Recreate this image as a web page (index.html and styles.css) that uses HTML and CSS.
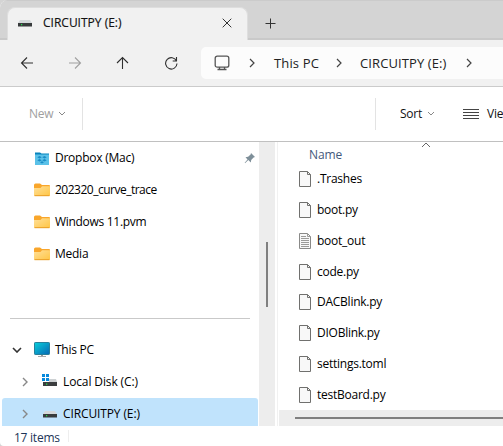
FILE: index.html
```html
<!DOCTYPE html>
<html lang="en">
<head>
<meta charset="utf-8">
<title>CIRCUITPY (E:)</title>
<link rel="stylesheet" href="styles.css">
</head>
<body>
<svg width="0" height="0" class="defs">
  <defs>
    <linearGradient id="gold" x1="0" y1="0" x2="1" y2="1"><stop offset="0" stop-color="#ffe09a"/><stop offset="1" stop-color="#ffc544"/></linearGradient>
    <linearGradient id="screen" x1="0" y1="0" x2="1" y2="1"><stop offset="0" stop-color="#08d0da"/><stop offset="1" stop-color="#0867b5"/></linearGradient>
    <symbol id="folder" viewBox="0 0 16 14"><path d="M0 2a1.500 1.500 0 0 1 1.500-1.500H6L8 2h7a1 1 0 0 1 1 1v4H0z" fill="#f9a62b"/><path d="M0 5h6.500L8 3.200h8V12a1 1 0 0 1-1 1H1a1 1 0 0 1-1-1z" fill="url(#gold)"/><path d="M.5 12.700h15" stroke="#e99d25"/></symbol>
    <symbol id="file" viewBox="0 0 12 16"><path d="M.5.500h8l3 3v12H.5z" fill="#f8f8f8" stroke="#70706e"/><path d="M8.500.500v3h3" fill="none" stroke="#70706e"/></symbol>
    <symbol id="textfile" viewBox="0 0 12 16"><path d="M.5.500h8l3 3v12H.5z" fill="#f8f8f8" stroke="#8a8a88"/><path d="M8.500.500v3h3M2 3.500h5M2 5.500h8M2 7.500h8M2 9.500h8M2 11.500h8M2 13.500h8" fill="none" stroke="#9b9b99"/></symbol>
    <symbol id="drive" viewBox="0 0 14 7"><path d="M2 0h10l2 3H0z" fill="#d4d8da"/><path d="M0 3h14v3.500H0z" fill="#383b3c"/><path d="M3 4h1.200v1.200H3z" fill="#24e04c"/></symbol>
    <symbol id="right" viewBox="0 0 6 10"><path d="M1 1l4 4-4 4" fill="none" stroke="currentColor" stroke-width="1.200"/></symbol>
    <symbol id="down" viewBox="0 0 8 5"><path d="M1 1l3 3 3-3" fill="none" stroke="currentColor"/></symbol>
  </defs>
</svg>
<div class="window">
  <header class="tabs">
    <div class="tab">
      <svg class="tab-drive"><use href="#drive"/></svg>
      <span class="tab-title">CIRCUITPY (E:)</span>
      <svg class="close" viewBox="0 0 10 10"><path d="M.7.700l8.600 8.600M9.300.700L.7 9.300"/></svg>
    </div>
    <svg class="plus" viewBox="0 0 11 11"><path d="M5.500.500v10M.5 5.500h10"/></svg>
  </header>
  <nav class="navbar">
    <svg class="nav-icon" viewBox="0 0 14 14"><path d="M13 7H1.500M7 1.500L1.500 7 7 12.500"/></svg>
    <svg class="nav-icon faded" viewBox="0 0 14 14"><path d="M1 7h11.500M7 1.500L12.500 7 7 12.500"/></svg>
    <svg class="nav-icon" viewBox="0 0 14 14"><path d="M6.500 13V1.500M1 7l5.500-5.500L12 7"/></svg>
    <svg class="nav-icon" viewBox="0 0 14 14"><path d="M12.500 5A5.700 5.700 0 1 0 13 7.500M12.500 1v4H8.700"/></svg>
    <div class="address">
      <svg class="monitor" viewBox="0 0 16 16"><rect x="1.200" y="1.200" width="13.600" height="11" rx="2"/><path d="M5.500 12v2.500M10.500 12v2.500M3.500 14.500h9"/></svg>
      <svg class="crumb-sep"><use href="#right"/></svg>
      <span class="crumb pc">This PC</span>
      <svg class="crumb-sep"><use href="#right"/></svg>
      <span class="crumb device">CIRCUITPY (E:)</span>
      <svg class="crumb-sep"><use href="#right"/></svg>
    </div>
  </nav>
  <div class="toolbar">
    <div class="new">New<svg class="drop"><use href="#down"/></svg></div>
    <div class="commands">
      <span class="sort">Sort</span><svg class="drop"><use href="#down"/></svg>
      <svg class="lines" viewBox="0 0 16 11"><path d="M0 .5h16M0 3.500h16M0 6.500h16M0 9.500h16"/></svg>
      <span class="view">View</span>
    </div>
  </div>
  <div class="content">
    <aside class="sidebar">
      <div class="row quick">
        <svg class="dropbox" viewBox="0 0 14 13"><path d="M0 .5h5l1.500 1H14v4H0z" fill="#0783bc"/><path d="M0 2.500h14V13H0z" fill="#5bc1e8"/><path d="M4.500 4L6.800 5.300 4.500 6.600 2.300 5.300zM9.500 4l2.200 1.300-2.200 1.300-2.300-1.300zM4.500 6.900l2.300 1.300-2.300 1.300-2.200-1.300zM9.500 6.900l2.200 1.300-2.200 1.300-2.300-1.300zM5 10.300L7 9.200l2 1.100-2 1.200z" fill="#1a8cc6"/></svg>
        <span class="t-dropbox">Dropbox (Mac)</span>
        <svg class="pin" viewBox="0 0 12 12"><path d="M7 1l4 4-1.400.400-2.400 2.500-.4 2.600-2.500-2.400L1 11.200l-.3-.4L3.500 7.400 1.500 5.200l2.600-.4L6.600 2.400z" fill="#7e8f99"/></svg>
      </div>
      <div class="row quick"><svg class="folder"><use href="#folder"/></svg><span class="t-curve">202320_curve_trace</span></div>
      <div class="row quick"><svg class="folder"><use href="#folder"/></svg><span class="t-win">Windows 11.pvm</span></div>
      <div class="row quick"><svg class="folder"><use href="#folder"/></svg><span>Media</span></div>
      <div class="divider"></div>
      <div class="row tree">
        <svg class="expand open" viewBox="0 0 10 6"><path d="M1 1l4 4 4-4"/></svg>
        <svg class="computer" viewBox="0 0 16 16"><path d="M7 12h2v3H7z" fill="#999"/><path d="M4 14.500h8" stroke="#aaa"/><rect x=".5" y=".5" width="15" height="12" rx=".7" fill="url(#screen)" stroke="#277f9a"/></svg>
        <span>This PC</span>
      </div>
      <div class="row leaf">
        <svg class="expand" viewBox="0 0 6 10"><path d="M1 1l4 4-4 4"/></svg>
        <svg class="disk" viewBox="0 0 16 13"><path d="M6 5h8l1 3H6z" fill="#cdd1d3"/><path d="M1 8h14v4H1z" fill="#3b3e3f"/><path d="M4 9.500h1.300v1.300H4z" fill="#24e04c"/><path d="M0 0h7v8H0z" fill="#fff"/><path d="M0 0h3v3H0zM4 0h3v3H4zM0 4h3v3H0zM4 4h3v3H4z" fill="#0789dc"/></svg>
        <span class="t-local">Local Disk (C:)</span>
      </div>
      <div class="row leaf selected">
        <svg class="expand" viewBox="0 0 6 10"><path d="M1 1l4 4-4 4"/></svg>
        <svg class="side-drive"><use href="#drive"/></svg>
        <span class="t-circuit">CIRCUITPY (E:)</span>
      </div>
    </aside>
    <div class="scrollbar"><div class="thumb"></div></div>
    <main class="files">
      <svg class="ascending" viewBox="0 0 10 6"><path d="M1 5l4-4 4 4"/></svg>
      <div class="heading">Name</div>
      <div class="file"><svg class="doc"><use href="#file"/></svg><span>.Trashes</span></div>
      <div class="file"><svg class="doc"><use href="#file"/></svg><span>boot.py</span></div>
      <div class="file"><svg class="doc"><use href="#textfile"/></svg><span>boot_out</span></div>
      <div class="file"><svg class="doc"><use href="#file"/></svg><span>code.py</span></div>
      <div class="file"><svg class="doc"><use href="#file"/></svg><span>DACBlink.py</span></div>
      <div class="file"><svg class="doc"><use href="#file"/></svg><span>DIOBlink.py</span></div>
      <div class="file"><svg class="doc"><use href="#file"/></svg><span>settings.toml</span></div>
      <div class="file"><svg class="doc"><use href="#file"/></svg><span>testBoard.py</span></div>
      <div class="hscroll"><div class="hthumb"></div></div>
    </main>
  </div>
  <footer class="status"><span>17 items</span></footer>
</div>
</body>
</html>
```
FILE: styles.css
```css
* { box-sizing: border-box; }
body { margin: 0; overflow: hidden; background: #d4d4d4; font: 12px/16px "Open Sans", "Noto Sans", sans-serif; letter-spacing: -.25px; color: #111; }
svg { display: block; flex-shrink: 0; }
.defs { position: absolute; }
span { white-space: nowrap; }
.window { width: 503px; height: 446px; display: flex; flex-direction: column; overflow: hidden; background: #fff; border-radius: 8px 0 0 4px; }
.tabs { height: 40px; flex: none; padding: 6px 0 0 7px; display: flex; background: #d4d4d4; border-top: 1px solid #cbcbcb; box-shadow: inset 0 -2px #c9c9c9; }
.tab { width: 241px; height: 33px; padding: 0 15px 2px 10px; display: flex; align-items: center; background: #f1f1f1; border: 1px solid #dedede; border-bottom: 0; border-radius: 8px 8px 0 0; }
.tab-drive { width: 14px; height: 7px; margin-right: 11px; }
.tab-title { letter-spacing: 0; -webkit-text-stroke: .15px #111; }
.close { width: 10px; height: 10px; margin-left: auto; fill: none; stroke: #333; }
.plus { width: 11px; height: 11px; margin: 11px 0 0 17px; fill: none; stroke: #333; }
.navbar { height: 47px; flex: none; display: flex; align-items: center; padding-left: 20px; background: #f1f1f1; border-bottom: 1px solid #cbcbcb; }
.nav-icon { width: 14px; height: 14px; margin-right: 34px; fill: none; stroke: #303030; stroke-width: 1.1; }
.nav-icon.faded { stroke: #a0a0a0; }
.nav-icon:nth-of-type(4) { margin-right: 23px; }
.address { flex: 1; height: 32px; padding-left: 13px; display: flex; align-items: center; background: #fcfcfc; border-radius: 5px 0 0 5px; font-size: 13px; color: #222; }
.monitor { width: 16px; height: 16px; margin-right: 19px; fill: none; stroke: #555; stroke-width: 1.3; }
.crumb-sep { width: 6px; height: 10px; color: #444; }
.crumb.pc { width: 46px; margin: 0 16px 0 19px; letter-spacing: .15px; }
.crumb.device { width: 88px; margin: 0 18px 0 18px; letter-spacing: .1px; }
.toolbar { height: 55px; flex: none; display: flex; justify-content: space-between; align-items: center; border-bottom: 1px solid #c0c0c0; }
.new { width: 83px; height: 32px; padding-left: 29px; display: flex; align-items: center; color: #a0a0a0; border-right: 1px solid #e3e3e3; }
.drop { width: 8px; height: 5px; margin: -2px 0 0 5px; color: #888; }
.commands { width: 128px; height: 32px; padding-left: 24px; display: flex; align-items: center; border-left: 1px solid #e3e3e3; overflow: hidden; }
.lines { width: 16px; height: 11px; margin: 0 8px 0 28px; fill: none; stroke: #444; }
.sort { width: 22px; }
.content { height: 284px; flex: none; display: flex; }
.sidebar { width: 259px; }
.row { height: 32px; display: flex; align-items: center; gap: 5px; color: #000; }
.quick { padding-left: 34px; }
.t-curve { letter-spacing: -.5px; }
.t-win { letter-spacing: -.3px; }
.t-local, .t-circuit { letter-spacing: -.12px; }
.folder { width: 16px; height: 14px; }
.dropbox { width: 14px; height: 13px; margin: 0 1px; }
.pin { width: 12px; height: 12px; margin: 0 3px 0 auto; }
.divider { height: 64px; margin-left: 10px; width: 240px; background: linear-gradient(#c9c9c9, #c9c9c9) 0 48px / 100% 1px no-repeat; }
.tree { padding-left: 12px; }
.expand { width: 6px; height: 10px; fill: none; stroke: #888; stroke-width: 1.4; }
.expand.open { width: 10px; height: 6px; margin-right: 7px; stroke: #333; stroke-width: 1.6; }
.computer { width: 16px; height: 16px; }
.leaf { padding-left: 22px; }
.disk { width: 16px; height: 13px; margin: -4px 0 0 9px; }
.side-drive { width: 14px; height: 7px; margin: 0 1px 0 10px; }
.selected { height: 28px; margin-left: 2px; width: 256px; padding: 4px 0 0 20px; background: #c0e3fc; border-radius: 3px 3px 0 0; }
.scrollbar { width: 16px; padding: 100px 0 0 7px; background: #ededed; }
.thumb { width: 2px; height: 65px; background: #808080; }
.files { flex: 1; display: flex; flex-direction: column; margin-left: 2px; padding-left: 1px; border-left: 1px solid #f1f1f1; color: #000; }
.ascending { width: 10px; height: 6px; margin-left: 142px; fill: none; stroke: #666; }
.heading { height: 15px; margin-left: 30px; line-height: 13px; color: #44597c; letter-spacing: -.1px; }
.file { height: 31px; display: flex; align-items: center; gap: 6px; padding: 1px 0 0 20px; }
.doc { width: 12px; height: 16px; }
.hscroll { height: 16px; margin-top: auto; padding: 7px 0 0 16px; background: #ededed; }
.hthumb { height: 2px; background: #808080; }
.status { flex: 1; padding: 4px 0 0 14px; color: #1c3558; }
.status span { display: inline-block; width: 55px; height: 12px; line-height: 16px; border-right: 1px solid #eee; }
```
